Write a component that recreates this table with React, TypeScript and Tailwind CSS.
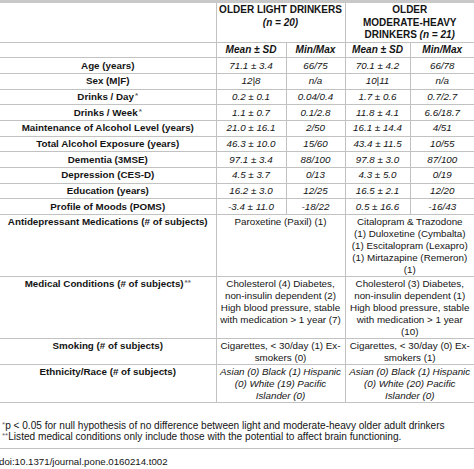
import React from "react";

// Shared cell styles
const line = "border-[#c2c2c2]";
const font = "font-['Liberation_Sans',Arial,sans-serif]";

const Star = ({ two = false }: { two?: boolean }) => (
  <span className="relative -top-[2px] ml-[1px] text-[8px] leading-[0] text-[#666]">
    {two ? "**" : "*"}
  </span>
);

interface DataRow {
  label: React.ReactNode;
  values: [string, string, string, string];
}

const dataRows: DataRow[] = [
  { label: "Age (years)", values: ["71.1 ± 3.4", "66/75", "70.1 ± 4.2", "66/78"] },
  { label: "Sex (M|F)", values: ["12|8", "n/a", "10|11", "n/a"] },
  {
    label: (
      <>
        Drinks / Day
        <Star />
      </>
    ),
    values: ["0.2 ± 0.1", "0.04/0.4", "1.7 ± 0.6", "0.7/2.7"],
  },
  {
    label: (
      <>
        Drinks / Week
        <Star />
      </>
    ),
    values: ["1.1 ± 0.7", "0.1/2.8", "11.8 ± 4.1", "6.6/18.7"],
  },
  {
    label: "Maintenance of Alcohol Level (years)",
    values: ["21.0 ± 16.1", "2/50", "16.1 ± 14.4", "4/51"],
  },
  {
    label: "Total Alcohol Exposure (years)",
    values: ["46.3 ± 10.0", "15/60", "43.4 ± 11.5", "10/55"],
  },
  { label: "Dementia (3MSE)", values: ["97.1 ± 3.4", "88/100", "97.8 ± 3.0", "87/100"] },
  { label: "Depression (CES-D)", values: ["4.5 ± 3.7", "0/13", "4.3 ± 5.0", "0/19"] },
  { label: "Education (years)", values: ["16.2 ± 3.0", "12/25", "16.5 ± 2.1", "12/20"] },
  {
    label: "Profile of Moods (POMS)",
    values: ["-3.4 ± 11.0", "-18/22", "0.5 ± 16.6", "-16/43"],
  },
];

interface TextRow {
  label: React.ReactNode;
  light: string[];
  heavy: string[];
  italic?: boolean;
}

const textRows: TextRow[] = [
  {
    label: "Antidepressant Medications (# of subjects)",
    light: ["Paroxetine (Paxil) (1)"],
    heavy: [
      "Citalopram & Trazodone",
      "(1) Duloxetine (Cymbalta)",
      "(1) Escitalopram (Lexapro)",
      "(1) Mirtazapine (Remeron)",
      "(1)",
    ],
  },
  {
    label: (
      <>
        Medical Conditions (# of subjects)
        <Star two />
      </>
    ),
    light: [
      "Cholesterol (4) Diabetes,",
      "non-insulin dependent (2)",
      "High blood pressure, stable",
      "with medication > 1 year (7)",
    ],
    heavy: [
      "Cholesterol (3) Diabetes,",
      "non-insulin dependent (1)",
      "High blood pressure, stable",
      "with medication > 1 year",
      "(10)",
    ],
  },
  {
    label: "Smoking (# of subjects)",
    light: ["Cigarettes, < 30/day (1) Ex-", "smokers (0)"],
    heavy: ["Cigarettes, < 30/day (0) Ex-", "smokers (1)"],
  },
  {
    label: "Ethnicity/Race (# of subjects)",
    light: ["Asian (0) Black (1) Hispanic", "(0) White (19) Pacific", "Islander (0)"],
    heavy: ["Asian (0) Black (1) Hispanic", "(0) White (20) Pacific", "Islander (0)"],
    italic: true,
  },
];

const Lines = ({ items }: { items: string[] }) => (
  <>
    {items.map((t, i) => (
      <span key={i} className="block whitespace-nowrap">
        {t}
      </span>
    ))}
  </>
);

export default function App() {
  const cell = `border-b ${line} px-[2px] py-0 text-center align-middle whitespace-nowrap`;
  const tall = `border-b ${line} px-[2px] pt-[1px] pb-0 text-center align-top`;
  const head = `border-t-[3px] border-t-[#c8c8c8] border-b ${line} px-0 pt-[1px] align-top font-bold text-[10px] whitespace-nowrap`;

  return (
    <div className={`w-[474px] h-[469px] overflow-hidden bg-white text-[#141414] ${font} text-[9.8px] leading-[12px]`}>
      <table className="w-[474px] table-fixed border-collapse">
        <colgroup>
          <col className="w-[216px]" />
          <col className="w-[70px]" />
          <col className="w-[59px]" />
          <col className="w-[65px]" />
          <col className="w-[64px]" />
        </colgroup>
        <thead>
          <tr className="h-[40px]">
            <th className={`${head} border-r`} />
            <th colSpan={2} className={`${head} border-r`}>
              <span className="block leading-[12.5px]">OLDER LIGHT DRINKERS</span>
              <span className="block leading-[12.5px]">
                <i>(n = 20)</i>
              </span>
            </th>
            <th colSpan={2} className={head}>
              <span className="block leading-[12.5px]">OLDER</span>
              <span className="block leading-[12.5px]">MODERATE-HEAVY</span>
              <span className="block leading-[12.5px]">
                DRINKERS <i>(n = 21)</i>
              </span>
            </th>
          </tr>
        </thead>
        <tbody>
          <tr className="h-[15.7px]">
            <td className={`${cell} border-r`} />
            <td className={`${cell} border-r font-bold italic text-[10.1px]`}>Mean ± SD</td>
            <td className={`${cell} border-r font-bold italic text-[10.1px]`}>Min/Max</td>
            <td className={`${cell} border-r font-bold italic text-[10.1px]`}>Mean ± SD</td>
            <td className={`${cell} font-bold italic text-[10.1px]`}>Min/Max</td>
          </tr>
          {dataRows.map((row, i) => (
            <tr key={i} className="h-[15.7px]">
              <td className={`${cell} border-r font-bold`}>{row.label}</td>
              {row.values.map((v, j) => (
                <td key={j} className={`${cell} italic ${j < 3 ? "border-r" : ""}`}>
                  {v}
                </td>
              ))}
            </tr>
          ))}
          {textRows.map((row, i) => (
            <tr key={i}>
              <td className={`${tall} border-r font-bold`}>{row.label}</td>
              <td colSpan={2} className={`${tall} border-r ${row.italic ? "italic" : ""}`}>
                <Lines items={row.light} />
              </td>
              <td colSpan={2} className={`${tall} ${row.italic ? "italic" : ""}`}>
                <Lines items={row.heavy} />
              </td>
            </tr>
          ))}
        </tbody>
      </table>

      {/* Footnotes */}
      <div className={`mt-[17px] border-b ${line} pb-[6px] pl-[1px] text-[10.1px] leading-[11px]`}>
        <p className="whitespace-nowrap">
          <Star />p &lt; 0.05 for null hypothesis of no difference between light and moderate-heavy older adult drinkers
        </p>
        <p className="whitespace-nowrap">
          <Star two />Listed medical conditions only include those with the potential to affect brain functioning.
        </p>
      </div>
      <p className="-ml-[1px] mt-[7px] whitespace-nowrap text-[9.7px]">doi:10.1371/journal.pone.0160214.t002</p>
    </div>
  );
}
